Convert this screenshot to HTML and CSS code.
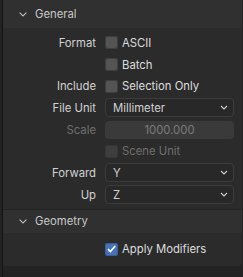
FILE: index.html
```html
<!DOCTYPE html>
<html lang="en">
<head>
  <meta charset="UTF-8" />
  <title>Export Options</title>
  <link rel="stylesheet" href="styles.css">
</head>
<body>
  <div class="area">
    <div class="panel">
      <div class="panel-head">
        <svg class="chev" width="8" height="5" viewBox="0 0 8 5"><path d="M0.6 0.6l3.4 3.4 3.4-3.4" fill="none" stroke="#bdbdbd" stroke-width="1.1"/></svg>
        <span>General</span>
      </div>
      <div class="panel-body">
        <div class="row">
          <label class="lbl">Format</label>
          <div class="field"><span class="check"></span><span class="ctext">ASCII</span></div>
        </div>
        <div class="row">
          <label class="lbl"></label>
          <div class="field"><span class="check"></span><span class="ctext">Batch</span></div>
        </div>
        <div class="row">
          <label class="lbl">Include</label>
          <div class="field"><span class="check"></span><span class="ctext">Selection Only</span></div>
        </div>
        <div class="row">
          <label class="lbl">File Unit</label>
          <div class="select"><span>Millimeter</span>
            <svg width="8" height="5" viewBox="0 0 8 5"><path d="M1 1l3 3 3-3" fill="none" stroke="#d0d0d0" stroke-width="1.1"/></svg>
          </div>
        </div>
        <div class="row disabled">
          <label class="lbl">Scale</label>
          <div class="number">1000.000</div>
        </div>
        <div class="row disabled">
          <label class="lbl"></label>
          <div class="field"><span class="check"></span><span class="ctext">Scene Unit</span></div>
        </div>
        <div class="row">
          <label class="lbl">Forward</label>
          <div class="select"><span>Y</span>
            <svg width="8" height="5" viewBox="0 0 8 5"><path d="M1 1l3 3 3-3" fill="none" stroke="#d0d0d0" stroke-width="1.1"/></svg>
          </div>
        </div>
        <div class="row">
          <label class="lbl">Up</label>
          <div class="select"><span>Z</span>
            <svg width="8" height="5" viewBox="0 0 8 5"><path d="M1 1l3 3 3-3" fill="none" stroke="#d0d0d0" stroke-width="1.1"/></svg>
          </div>
        </div>
      </div>
    </div>

    <div class="panel last">
      <div class="panel-head">
        <svg class="chev" width="8" height="5" viewBox="0 0 8 5"><path d="M0.6 0.6l3.4 3.4 3.4-3.4" fill="none" stroke="#bdbdbd" stroke-width="1.1"/></svg>
        <span>Geometry</span>
      </div>
      <div class="panel-body geo">
        <div class="row">
          <label class="lbl"></label>
          <div class="field">
            <span class="check on"><svg width="11" height="10" viewBox="0 0 11 10"><path d="M2 5.2l2.4 2.4L9.2 2" fill="none" stroke="#fff" stroke-width="1.7"/></svg></span>
            <span class="ctext">Apply Modifiers</span>
          </div>
        </div>
      </div>
    </div>
  </div>
</body>
</html>
```

FILE: styles.css
```css
body { margin: 0; background: #232323; font-family: Inter, "DejaVu Sans", sans-serif; font-size: 11.3px; color: #d2d2d2; }
.area { height: 277px; margin-left: 2px; border-left: 1px solid #141414; padding-right: 1px; }
.panel { background: #2b2b2b; }
.panel.last { border-radius: 0 0 4px 0; margin-top: 1px; }
.panel-head { height: 28px; background: #303030; display: flex; align-items: center; padding-left: 16px; color: #c8c8c8; }
.panel.last .panel-head { height: 23px; }
.chev { margin-right: 8px; }
.panel-body { padding: 4px 0 3px 0; }
.panel-body.geo { padding: 6px 0 6px 0; }
.row { height: 21.7px; display: flex; align-items: center; }
.lbl { width: 93px; text-align: right; padding-right: 9px; color: #d2d2d2; }
.field { display: flex; align-items: center; }
.check { width: 13px; height: 13px; border-radius: 3px; background: #545454; box-shadow: inset 0 0 0 1px #3e3e3e; display: inline-flex; align-items: center; justify-content: center; }
.check.on { background: #4772b3; box-shadow: inset 0 0 0 1px #3c5f94; }
.ctext { margin-left: 4px; color: #dedede; }
.select { width: 129px; height: 19px; border: 1px solid #3c3c3c; border-radius: 4px; background: #282828; display: flex; align-items: center; justify-content: space-between; padding: 0 5px 0 7px; box-sizing: border-box; }
.number { width: 129px; height: 18px; border-radius: 4px; background: #3a3a3a; text-align: center; line-height: 18px; color: #7c7c7c; }
.disabled .lbl, .disabled .ctext { color: #6f6f6f; }
.disabled .check { background: #3e3e3e; box-shadow: inset 0 0 0 1px #363636; }
```
